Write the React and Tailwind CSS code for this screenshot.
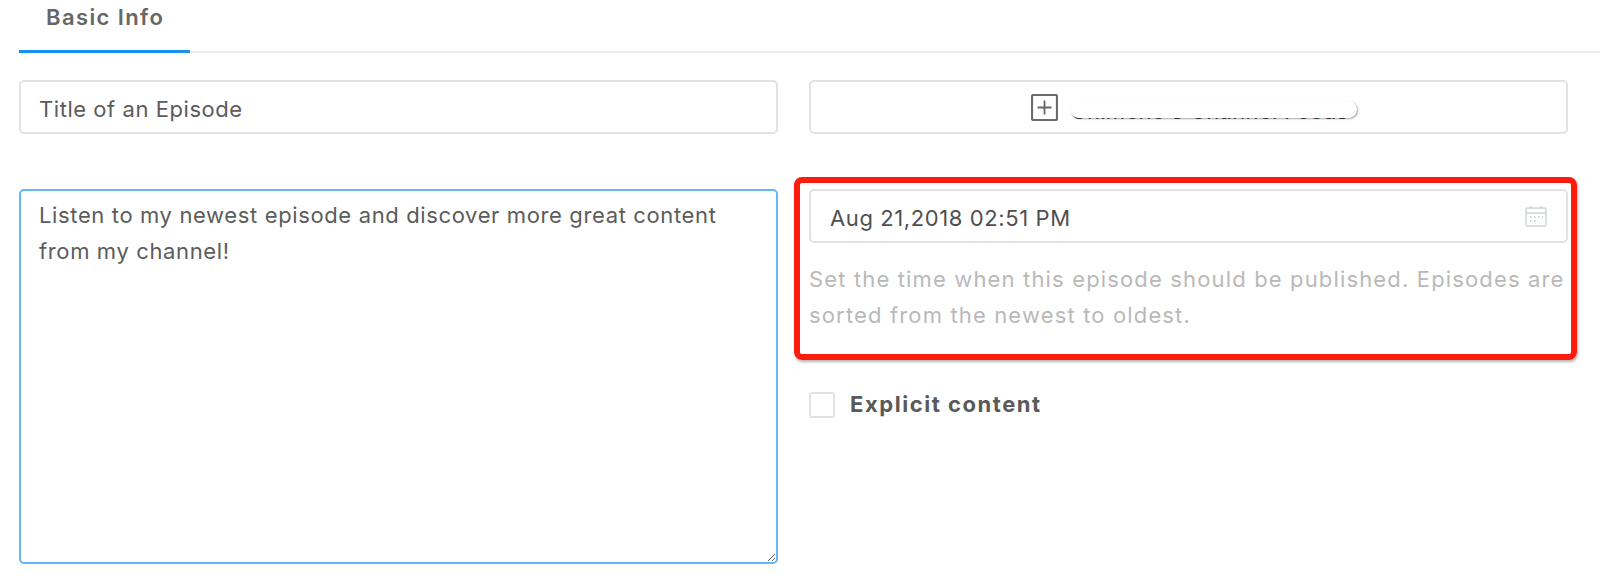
function PlusBox() {
  return (
    <svg width="27" height="27" viewBox="0 0 27 27" fill="none" className="shrink-0">
      <rect x="1" y="1" width="25" height="25" rx="1.5" stroke="#6b6b6b" strokeWidth="2.2" />
      <path d="M13.5 6.5v14M6.5 13.5h14" stroke="#666666" strokeWidth="1.8" />
    </svg>
  );
}

function CalendarIcon() {
  return (
    <svg width="22" height="22" viewBox="0 0 22 22" fill="none">
      <rect x="1" y="3" width="20" height="18" rx="1.5" stroke="#cfd3d7" strokeWidth="1.4" />
      <path d="M1 8h20M6 1v3M16 1v3" stroke="#cfd3d7" strokeWidth="1.4" />
      <path d="M5 12h1.6M9 12h1.6M13 12h1.6M17 12h1.2M5 16h1.6M9 16h1.6" stroke="#c4c8cc" strokeWidth="1.6" />
    </svg>
  );
}

export default function App() {
  return (
    <div className="h-[582px] overflow-hidden bg-white pl-[19px] pr-[32px] font-['Inter',sans-serif] text-[22px] text-[#5c5c5c]">
      <div className="-mr-[32px] h-[53px] border-b-2 border-[#ececec]">
        <div className="h-[53px] w-[171px] border-b-[3px] border-[#1890f0] pl-[27px] pt-[1px] text-[22px] leading-[32px] font-semibold tracking-[1.4px] text-[#666666]">
          Basic Info
        </div>
      </div>

      <div className="mt-[27px] grid grid-cols-[759px_1fr] gap-x-[31px]">
        <div className="flex h-[54px] items-center rounded-[5px] border-2 border-[#e2e2e2] pl-[18px] pt-[4px] tracking-[0.55px]">
          Title of an Episode
        </div>
        <div className="flex h-[54px] items-center justify-center gap-[13px] rounded-[5px] border-2 border-[#e2e2e2] pl-[2px]">
          <PlusBox />
          <div className="relative mt-[8px]">
            <span className="text-[#3f3f3f] tracking-[0.3px]">Chimene's Channel Feeds</span>
            <div className="absolute -left-[1px] -right-[9px] top-[6px] h-[17px] rounded-[9px] bg-white shadow-[1px_1px_2px_rgba(0,0,0,0.35)]" />
          </div>
        </div>
      </div>

      <div className="mt-[55px] grid grid-cols-[759px_1fr] gap-x-[31px]">
        <textarea
          defaultValue={"Listen to my newest episode and discover more great content from my channel!"}
          className="h-[375px] w-full resize rounded-[5px] border-2 border-[#62b8f7] px-[18px] py-[6px] leading-[36px] tracking-[0.63px] text-[#5c5c5c] outline-none"
        />
        <div>
          <div className="relative">
            <div className="flex h-[54px] items-center justify-between rounded-[5px] border-2 border-[#e2e2e2] pr-[19px] pl-[19px] text-[#4f4f4f]">
              <span className="pt-[4px] tracking-[0.6px]">Aug 21,2018 02:51 PM</span>
              <CalendarIcon />
            </div>
            <p className="mt-[18px] text-[#b9b9b9] leading-[36px] tracking-[1.15px]">
              Set the time when this episode should be published. Episodes are sorted from the newest to oldest.
            </p>
            <div className="absolute -top-[12px] -left-[15px] -right-[9px] h-[183px] rounded-[8px] border-[6px] border-[#fb1c0e] shadow-[1px_2px_3px_rgba(0,0,0,0.3)]" />
          </div>
          <label className="mt-[55px] flex items-center gap-[15px] font-bold text-[#5a5a5a] tracking-[1.55px]">
            <span className="h-[26px] w-[26px] rounded-[3px] border-2 border-[#e2e2e2]" />
            Explicit content
          </label>
        </div>
      </div>
    </div>
  );
}
